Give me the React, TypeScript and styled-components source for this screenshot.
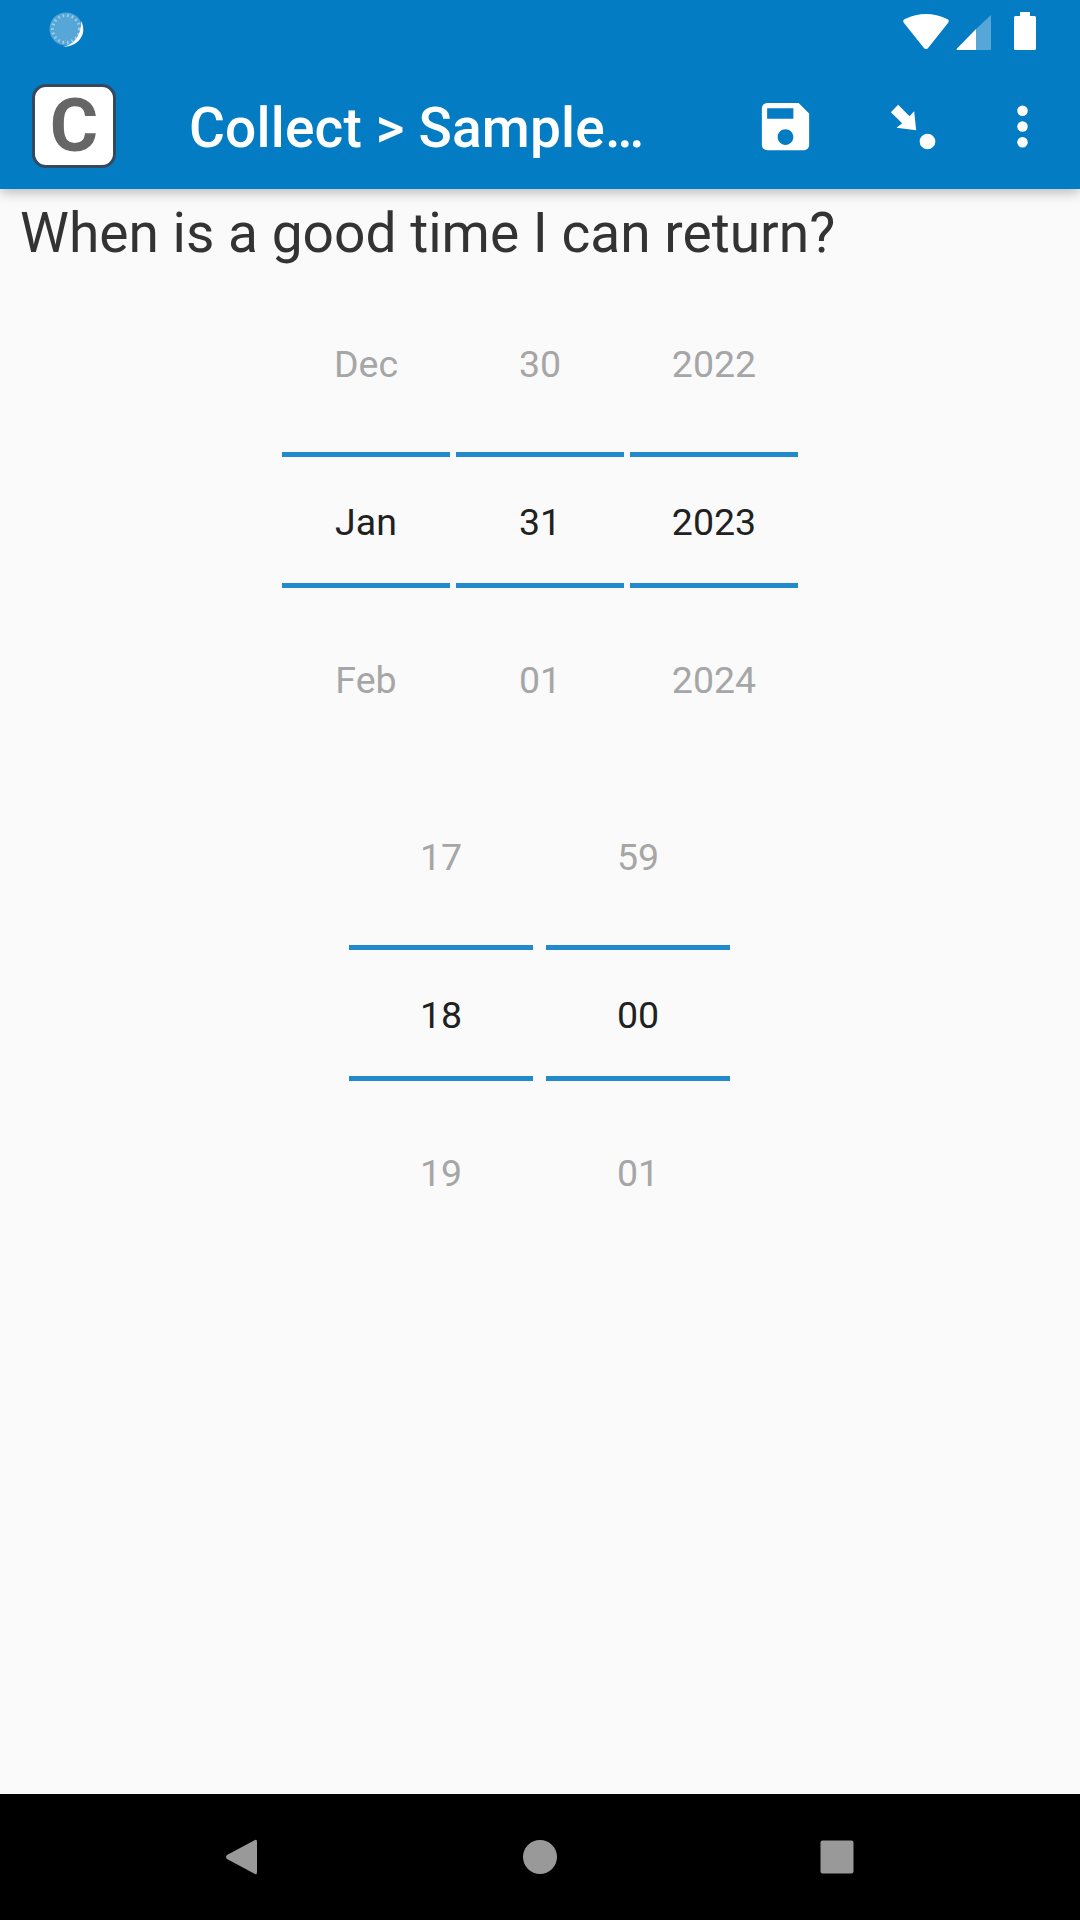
import styled, { createGlobalStyle } from "styled-components";

const GlobalStyle = createGlobalStyle`
  html, body {
    margin: 0;
    padding: 0;
    background: #fafafa;
    font-family: Roboto, "Liberation Sans", sans-serif;
  }
`;

const Screen = styled.div`
  width: 1080px;
  height: 1920px;
  display: flex;
  flex-direction: column;
  overflow: hidden;
  background: #fafafa;
`;

const Header = styled.header`
  background: #047cc3;
  box-shadow: 0 3px 12px rgba(0, 0, 0, 0.28);
  position: relative;
  z-index: 1;
`;

const StatusBar = styled.div`
  height: 63px;
  display: flex;
  align-items: flex-start;
  padding: 0 44px 0 48px;
  box-sizing: border-box;
`;

const Spinner = styled.svg`
  width: 40px;
  height: 40px;
  margin-top: 11px;
`;

const StatusIcons = styled.div`
  margin-left: auto;
  display: flex;
  align-items: flex-start;
`;

const WifiIcon = styled.svg`
  width: 48px;
  height: 38px;
  margin-top: 12px;
`;

const SignalIcon = styled.svg`
  width: 36px;
  height: 36px;
  margin: 15px 0 0 6px;
`;

const BatteryIcon = styled.svg`
  width: 22px;
  height: 38px;
  margin: 12px 0 0 22px;
`;

const Toolbar = styled.div`
  height: 126px;
  display: flex;
  align-items: center;
  padding: 0 10px 0 32px;
`;

const Logo = styled.div`
  width: 84px;
  height: 84px;
  box-sizing: border-box;
  border: 3px solid #34495e;
  border-radius: 14px;
  background: #fff;
  color: #666;
  display: flex;
  align-items: center;
  justify-content: center;
  font-weight: 700;
  font-size: 74px;
  line-height: 1;
`;

const Title = styled.div`
  margin-left: 73px;
  padding-top: 4px;
  flex: 1;
  color: #fff;
  font-size: 55.1px;
  font-weight: 500;
  letter-spacing: 0.15px;
  white-space: nowrap;
`;

const ActionButton = styled.div<{ $narrow?: boolean }>`
  width: ${({ $narrow }) => ($narrow ? "96px" : "126px")};
  height: 126px;
  display: flex;
  align-items: center;
  justify-content: center;
  flex-shrink: 0;
`;

const ActionIcon = styled.svg`
  width: 63px;
  height: 63px;
  fill: #fff;
`;

const Content = styled.main`
  flex: 1;
  display: flex;
  flex-direction: column;
  gap: 5px;
`;

const Question = styled.div`
  padding: 11px 20px 0;
  height: 82px;
  box-sizing: border-box;
  color: #333;
  font-size: 55.1px;
  line-height: 66px;
  white-space: nowrap;
`;

const Picker = styled.div<{ $gap: number; $nudge?: boolean }>`
  display: flex;
  justify-content: center;
  gap: ${({ $gap }) => $gap}px;
  padding-right: ${({ $nudge }) => ($nudge ? "1px" : "0")};
`;

const Wheel = styled.div<{ $width: number }>`
  width: ${({ $width }) => $width}px;
  display: flex;
  flex-direction: column;
  font-size: 37.5px;
  text-align: center;
`;

const FadedCell = styled.div<{ $below?: boolean }>`
  height: 176px;
  box-sizing: border-box;
  padding-top: ${({ $below }) => ($below ? "8px" : "0")};
  display: flex;
  align-items: center;
  justify-content: center;
  color: #a6a6a6;
`;

const SelectedCell = styled.div`
  height: 136px;
  box-sizing: border-box;
  padding-top: 3px;
  border-top: 5px solid #2289cb;
  border-bottom: 5px solid #2289cb;
  display: flex;
  align-items: center;
  justify-content: center;
  color: #212121;
`;

const NavBar = styled.nav`
  height: 126px;
  background: #000;
  display: flex;
  align-items: center;
  justify-content: space-between;
  padding: 0 226px;
  box-sizing: border-box;
`;

const NavIcon = styled.svg`
  width: 34px;
  height: 36px;
  fill: #999;
`;

const DATE_WHEELS = [
  ["Dec", "Jan", "Feb"],
  ["30", "31", "01"],
  ["2022", "2023", "2024"],
];

const TIME_WHEELS = [
  ["17", "18", "19"],
  ["59", "00", "01"],
];

const PickerGroup = ({
  wheels,
  width,
  gap,
  nudge,
}: {
  wheels: string[][];
  width: number;
  gap: number;
  nudge?: boolean;
}) => (
  <Picker $gap={gap} $nudge={nudge}>
    {wheels.map(([prev, current, next]) => (
      <Wheel key={current} $width={width}>
        <FadedCell>{prev}</FadedCell>
        <SelectedCell>{current}</SelectedCell>
        <FadedCell $below>{next}</FadedCell>
      </Wheel>
    ))}
  </Picker>
);

export default function App() {
  return (
    <Screen>
      <GlobalStyle />
      <Header>
        <StatusBar>
          <Spinner viewBox="0 0 40 40">
            <circle cx="18" cy="18" r="16.5" fill="#fff" opacity="0.33" />
            <circle cx="18" cy="18" r="13.5" fill="none" stroke="#fff" strokeOpacity="0.45" strokeWidth="3" strokeDasharray="1.6 3" />
            <path d="M33 10 Q36 15 35 22 Q31 35 15 36 Q28 33 32 20 Q33.5 15 33 10 Z" fill="#fff" />
          </Spinner>
          <StatusIcons>
            <WifiIcon viewBox="0 0 48 38">
              <path d="M24 37 Q22.5 37 21.5 35.5 L2 11 Q0 8 3 7 Q24 -3 45 7 Q48 8 46 11 L26.5 35.5 Q25.5 37 24 37 Z" fill="#fff" />
            </WifiIcon>
            <SignalIcon viewBox="0 0 36 36">
              <path d="M35 0 V34 Q35 35 34 35 H20 V14 Z" fill="#fff" opacity="0.33" />
              <path d="M20 14 V35 H1 Q0 34.5 1 33.5 Z" fill="#fff" />
            </SignalIcon>
            <BatteryIcon viewBox="0 0 22 38">
              <path d="M6 0 H16 V4 H20.5 Q22 4 22 5.5 V36.5 Q22 38 20.5 38 H1.5 Q0 38 0 36.5 V5.5 Q0 4 1.5 4 H6 Z" fill="#fff" />
            </BatteryIcon>
          </StatusIcons>
        </StatusBar>
        <Toolbar>
          <Logo>C</Logo>
          <Title>Collect &gt; Sample…</Title>
          <ActionButton>
            <ActionIcon viewBox="0 0 24 24">
              <path d="M17 3H5a2 2 0 0 0-2 2v14c0 1.1.9 2 2 2h14c1.1 0 2-.9 2-2V7l-4-4zm-5 16c-1.66 0-3-1.34-3-3s1.34-3 3-3 3 1.34 3 3-1.34 3-3 3zm3-10H5V5h10v4z" />
            </ActionIcon>
          </ActionButton>
          <ActionButton>
            <ActionIcon viewBox="478.5 283.5 189 189">
              <path d="M511 335 L533 313 L567 347 L581 332 L587 389 L528 382 L545 368 Z" />
              <circle cx="621" cy="423" r="23.5" />
            </ActionIcon>
          </ActionButton>
          <ActionButton $narrow>
            <ActionIcon viewBox="0 0 24 24">
              <circle cx="12" cy="6" r="2" />
              <circle cx="12" cy="12" r="2" />
              <circle cx="12" cy="18" r="2" />
            </ActionIcon>
          </ActionButton>
        </Toolbar>
      </Header>
      <Content>
        <Question>When is a good time I can return?</Question>
        <PickerGroup wheels={DATE_WHEELS} width={168} gap={6} />
        <PickerGroup wheels={TIME_WHEELS} width={184} gap={13} nudge />
      </Content>
      <NavBar>
        <NavIcon viewBox="0 0 34 36">
          <path d="M29 1 Q31 0 31 3 V33 Q31 36 29 35 L1 20 Q-1 18 1 16 Z" />
        </NavIcon>
        <NavIcon viewBox="0 0 34 36">
          <circle cx="17" cy="18" r="17" />
        </NavIcon>
        <NavIcon viewBox="0 0 34 36">
          <rect x="0.5" y="1.5" width="33" height="33" rx="2" />
        </NavIcon>
      </NavBar>
    </Screen>
  );
}
